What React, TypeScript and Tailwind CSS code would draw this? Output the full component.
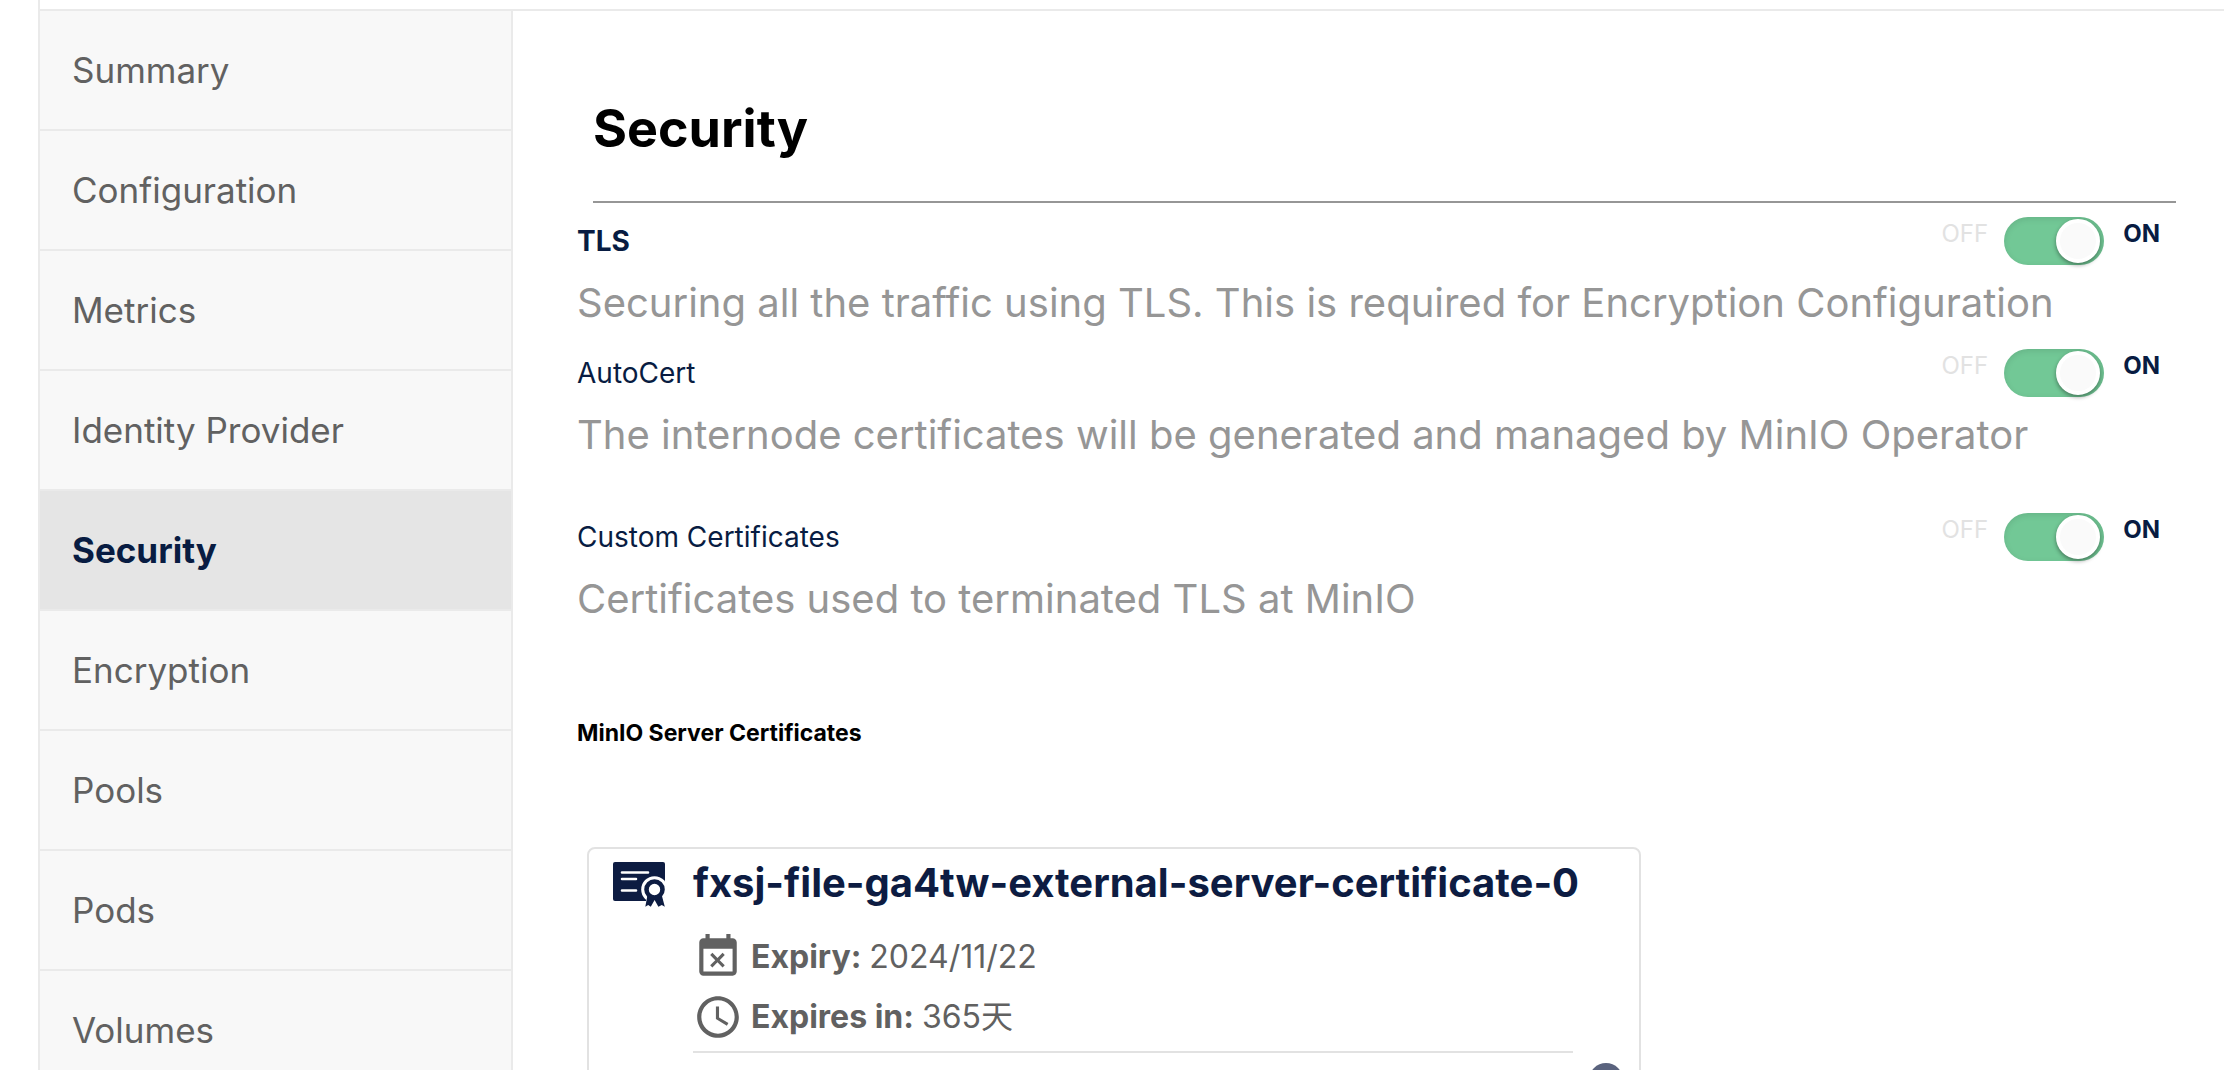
import React, { useId, useState } from "react";
import { MdAccessTime, MdEventBusy } from "react-icons/md";

const tabs = [
  "Summary",
  "Configuration",
  "Metrics",
  "Identity Provider",
  "Security",
  "Encryption",
  "Pools",
  "Pods",
  "Volumes",
];

function CertificateIcon() {
  return (
    <svg viewBox="0 0 52 45" className="mt-[3px] h-[45px] w-[52px] shrink-0" aria-hidden="true">
      <rect x="0" y="0" width="52" height="39" rx="2" fill="#0d1c42" />
      <path d="M9 10.5H35M9 17H23M9 28.5H23" stroke="#fff" strokeWidth="2.6" strokeLinecap="round" />
      <circle cx="41.5" cy="27.5" r="13.3" fill="#fff" />
      <path d="M33 36H52V45H33Z" fill="#fff" />
      <path d="M34.5 33L32.3 44.8L35.2 43L37.8 44.8L41.6 38L45.4 44.8L48.8 43L51.8 44.8L48.7 33Z" fill="#0d1c42" />
      <circle cx="41.5" cy="27.5" r="8" fill="#fff" stroke="#0d1c42" strokeWidth="4.6" />
    </svg>
  );
}

function SettingToggle({
  label,
  description,
  bold = false,
}: {
  label: string;
  description: string;
  bold?: boolean;
}) {
  const id = useId();
  const [on, setOn] = useState(true);
  return (
    <div>
      <div className="flex h-12 items-center justify-between pr-4">
        <label htmlFor={id} className={bold ? "text-[28px] font-bold text-[#081c42]" : "text-[28px] text-[#081c42]"}>
          {label}
        </label>
        <div className="flex items-start text-2xl">
          <span className={on ? "leading-[34px] text-[#e2e2e2]" : "leading-[34px] font-bold text-[#081c42]"}>OFF</span>
          <span className="relative mr-[19px] ml-4 flex h-12 w-[100px] items-center rounded-full bg-[#72c896] px-1 shadow-[inset_0_2px_6px_rgba(0,0,0,0.1)]">
            <input
              id={id}
              type="checkbox"
              role="switch"
              checked={on}
              onChange={(e) => setOn(e.target.checked)}
              className="peer absolute inset-0 z-10 cursor-pointer opacity-0"
            />
            <span className="h-11 w-11 rounded-full border-4 border-white bg-[#fafafa] shadow-[0_2px_4px_rgba(0,0,0,0.4)] peer-checked:ml-auto" />
          </span>
          <span className={on ? "leading-[34px] font-bold text-[#081c42]" : "leading-[34px] text-[#e2e2e2]"}>ON</span>
        </div>
      </div>
      <p className="mt-2 text-[40px] leading-[60px] text-[#969696]">{description}</p>
    </div>
  );
}

export default function App() {
  return (
    <div className="h-screen overflow-hidden bg-white pl-[38px] font-['Inter','Noto_Sans_CJK_SC',sans-serif]">
      <div className="flex h-full flex-col border-l-2 border-[#eaeaea] pt-[9px]">
        <div className="flex grow border-t-2 border-[#eaeaea]">
          <nav className="w-[473px] shrink-0 border-r-2 border-[#eaeaea] bg-[#f8f8f8]">
            {tabs.map((tab) => (
              <button
                key={tab}
                type="button"
                className={
                  tab === "Security"
                    ? "flex h-[120px] w-full items-center border-b-2 border-[#eaeaea] bg-[#e5e5e5] px-8 text-[35px] font-bold text-[#081c42]"
                    : "flex h-[120px] w-full items-center border-b-2 border-[#eaeaea] px-8 text-[35px] text-[#616161]"
                }
              >
                {tab}
              </button>
            ))}
          </nav>

          <main className="min-w-0 grow pt-[86px] pr-12 pl-16">
            <h1 className="ml-4 border-b-2 border-[#969696] pb-10 text-[52px] leading-[64px] font-bold text-black">
              Security
            </h1>

            <div className="mt-[14px] flex flex-col gap-4">
              <SettingToggle
                bold
                label="TLS"
                description="Securing all the traffic using TLS. This is required for Encryption Configuration"
              />
              <SettingToggle
                label="AutoCert"
                description="The internode certificates will be generated and managed by MinIO Operator"
              />
            </div>
            <div className="mt-12">
              <SettingToggle label="Custom Certificates" description="Certificates used to terminated TLS at MinIO" />
            </div>

            <h2 className="mt-[88px] text-[23px] leading-8 font-bold text-black">MinIO Server Certificates</h2>

            <article className="mt-[98px] ml-[10px] w-[1054px] rounded-lg border-2 border-[#e2e2e2] pt-[10px] pb-6">
              <div className="flex gap-7 pr-[66px] pl-6">
                <CertificateIcon />
                <div className="min-w-0 grow">
                  <h3 className="text-[40px] leading-[48px] font-bold whitespace-nowrap text-[#0d1c42]">
                    fxsj-file-ga4tw-external-server-certificate-0
                  </h3>
                  <dl className="mt-5 border-b-2 border-[#e2e2e2] pb-1 text-[32px] text-[#616161]">
                    <div className="flex h-[60px] items-center gap-2">
                      <MdEventBusy className="size-[50px]" />
                      <dt className="font-bold">Expiry:</dt>
                      <dd>2024/11/22</dd>
                    </div>
                    <div className="flex h-[60px] items-center gap-2">
                      <MdAccessTime className="size-[50px]" />
                      <dt className="font-bold">Expires in:</dt>
                      <dd>365天</dd>
                    </div>
                  </dl>
                </div>
              </div>
              <div className="flex justify-end pt-[10px] pr-4">
                <button type="button" aria-label="Remove certificate" className="size-[34px] rounded-full bg-[#5a637e]" />
              </div>
            </article>
          </main>
        </div>
      </div>
    </div>
  );
}
